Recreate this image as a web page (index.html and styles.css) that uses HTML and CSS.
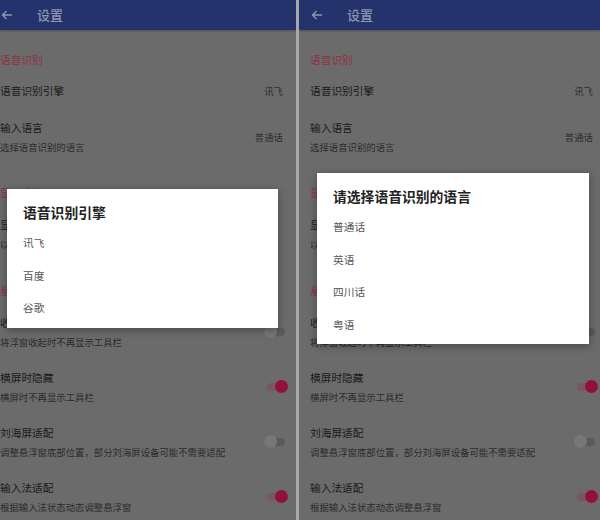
FILE: index.html
```html
<!DOCTYPE html>
<html lang="zh-CN">
<head>
<meta charset="utf-8">
<title>设置</title>
<link rel="stylesheet" href="styles.css">
</head>
<body>
<div class="page">
  <div class="screen screen-left">
    <div class="appbar">
      <svg class="back" width="12" height="10" viewBox="0 0 12 10"><path d="M11 5H1.5M5.5 1L1.5 5L5.5 9" fill="none" stroke="#8e96b3" stroke-width="1.4"/></svg>
      <span class="appbar-title">设置</span>
    </div>
    <div class="list">
      <div class="header">语音识别</div>
      <div class="row row-single"><div class="texts"><div class="title">语音识别引擎</div></div><div class="value">讯飞</div></div>
      <div class="row"><div class="texts"><div class="title">输入语言</div><div class="sub">选择语音识别的语言</div></div><div class="value">普通话</div></div>
      <div class="header">显示设置</div>
      <div class="row"><div class="texts"><div class="title">显示悬浮窗</div><div class="sub">以悬浮窗的形式显示工具栏</div></div></div>
      <div class="header">悬浮窗</div>
      <div class="row"><div class="texts"><div class="title">收起时隐藏</div><div class="sub">将浮窗收起时不再显示工具栏</div></div><div class="switch"><div class="knob"></div></div></div>
      <div class="row"><div class="texts"><div class="title">横屏时隐藏</div><div class="sub">横屏时不再显示工具栏</div></div><div class="switch on"><div class="knob"></div></div></div>
      <div class="row"><div class="texts"><div class="title">刘海屏适配</div><div class="sub">调整悬浮窗底部位置，部分刘海屏设备可能不需要适配</div></div><div class="switch"><div class="knob"></div></div></div>
      <div class="row"><div class="texts"><div class="title">输入法适配</div><div class="sub">根据输入法状态动态调整悬浮窗</div></div><div class="switch on"><div class="knob"></div></div></div>
    </div>
    <div class="dialog dialog-left">
      <div class="dialog-title">语音识别引擎</div>
      <div class="options">
        <div class="option">讯飞</div>
        <div class="option">百度</div>
        <div class="option">谷歌</div>
      </div>
    </div>
  </div>
  <div class="divider"></div>
  <div class="screen screen-right">
    <div class="appbar">
      <svg class="back" width="12" height="10" viewBox="0 0 12 10"><path d="M11 5H1.5M5.5 1L1.5 5L5.5 9" fill="none" stroke="#8e96b3" stroke-width="1.4"/></svg>
      <span class="appbar-title">设置</span>
    </div>
    <div class="list">
      <div class="header">语音识别</div>
      <div class="row row-single"><div class="texts"><div class="title">语音识别引擎</div></div><div class="value">讯飞</div></div>
      <div class="row"><div class="texts"><div class="title">输入语言</div><div class="sub">选择语音识别的语言</div></div><div class="value">普通话</div></div>
      <div class="header">显示设置</div>
      <div class="row"><div class="texts"><div class="title">显示悬浮窗</div><div class="sub">以悬浮窗的形式显示工具栏</div></div></div>
      <div class="header">悬浮窗</div>
      <div class="row"><div class="texts"><div class="title">收起时隐藏</div><div class="sub">将浮窗收起时不再显示工具栏</div></div><div class="switch"><div class="knob"></div></div></div>
      <div class="row"><div class="texts"><div class="title">横屏时隐藏</div><div class="sub">横屏时不再显示工具栏</div></div><div class="switch on"><div class="knob"></div></div></div>
      <div class="row"><div class="texts"><div class="title">刘海屏适配</div><div class="sub">调整悬浮窗底部位置，部分刘海屏设备可能不需要适配</div></div><div class="switch"><div class="knob"></div></div></div>
      <div class="row"><div class="texts"><div class="title">输入法适配</div><div class="sub">根据输入法状态动态调整悬浮窗</div></div><div class="switch on"><div class="knob"></div></div></div>
    </div>
    <div class="dialog dialog-right">
      <div class="dialog-title">请选择语音识别的语言</div>
      <div class="options">
        <div class="option">普通话</div>
        <div class="option">英语</div>
        <div class="option">四川话</div>
        <div class="option">粤语</div>
      </div>
    </div>
  </div>
</div>
</body>
</html>
```
FILE: styles.css
```css
html, body {
  margin: 0;
  padding: 0;
  background: #6b6b6b;
}
body {
  font-family: "Noto Sans CJK SC", "Noto Sans", sans-serif;
}
.page {
  display: flex;
  width: 600px;
  height: 520px;
  overflow: hidden;
}
.screen {
  position: relative;
  height: 520px;
  overflow: hidden;
  background: #6b6b6b;
}
.screen-left {
  width: 296px;
  --pl: 0px;
  --pr: 13px;
}
.screen-right {
  flex: 1;
  --pl: 11px;
  --pr: 7px;
}
.divider {
  width: 3px;
  background: #a8a8a8;
}
.appbar {
  height: 30px;
  background: #24336b;
  display: flex;
  align-items: center;
  padding-left: calc(var(--pl) + 1px);
  box-shadow: 0 1px 2px rgba(0, 0, 0, 0.25);
}
.back {
  display: block;
  margin-top: -1px;
}
.appbar-title {
  margin-left: 24px;
  font-size: 13px;
  line-height: 26px;
  color: #8e96b3;
  font-weight: 500;
}
.list {
  display: flex;
  flex-direction: column;
  padding-left: var(--pl);
  padding-right: var(--pr);
}
.header {
  padding-top: 16.5px;
  line-height: 26px;
  font-size: 10.7px;
  color: #8f3246;
}
.row {
  display: flex;
  align-items: center;
  justify-content: space-between;
  padding: 9px 0 8px 0;
}
.row-single {
  padding: 8px 0 8px 0;
}
.title {
  font-size: 10.7px;
  line-height: 20px;
  color: #1a1a1a;
}
.sub {
  font-size: 9.4px;
  line-height: 18px;
  color: #2c2c2c;
  white-space: nowrap;
}
.value {
  font-size: 9.4px;
  color: #2c2c2c;
  line-height: 18px;
}
.switch {
  flex: none;
  width: 18px;
  height: 8px;
  border-radius: 4px;
  background: #5a5a5a;
  display: flex;
  align-items: center;
  justify-content: flex-start;
  margin-right: -2px;
}
.switch .knob {
  flex: none;
  width: 13px;
  height: 13px;
  border-radius: 50%;
  background: #777777;
  margin-left: -3px;
}
.switch.on {
  background: #765860;
  justify-content: flex-end;
}
.switch.on .knob {
  background: #931139;
  margin-left: 0;
  margin-right: -3px;
}
.dialog {
  position: absolute;
  background: #ffffff;
  box-shadow: 0 2px 8px rgba(0, 0, 0, 0.35);
  padding: 13px 0 3px 16px;
  box-sizing: border-box;
}
.dialog-left {
  left: 7px;
  top: 189px;
  width: 271px;
}
.dialog-right {
  left: 18px;
  top: 173px;
  width: 272px;
}
.dialog-title {
  font-size: 13.8px;
  line-height: 20px;
  font-weight: 700;
  color: #222222;
}
.options {
  margin-top: 5px;
  display: flex;
  flex-direction: column;
}
.option {
  height: 32.5px;
  line-height: 32.5px;
  font-size: 10.7px;
  color: #575757;
}
```
